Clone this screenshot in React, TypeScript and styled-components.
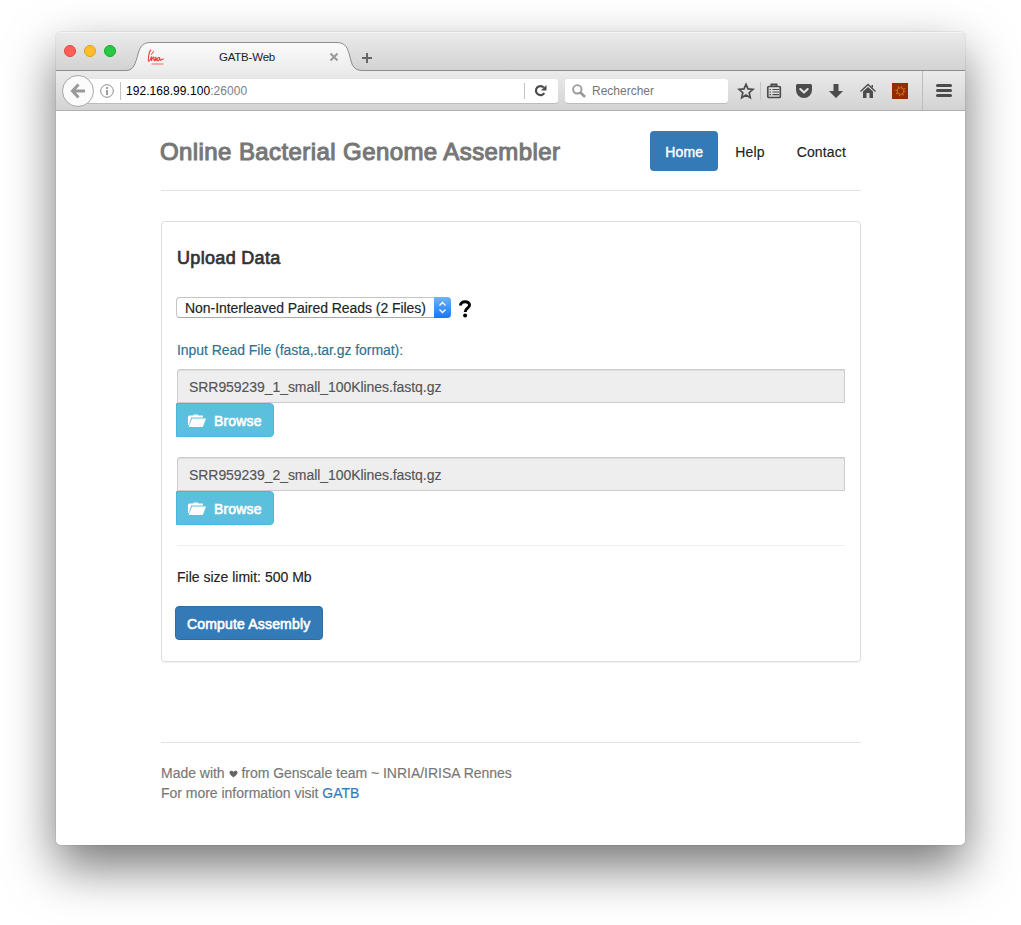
import React from "react";
import styled, { createGlobalStyle, css } from "styled-components";

const GlobalStyle = createGlobalStyle`
  * { box-sizing: border-box; }
  html, body { margin: 0; padding: 0; background: #fff; }
  body { font-family: "Liberation Sans", Arial, sans-serif; font-size: 14px; line-height: 20px; color: #222; }
  svg { display: block; flex: none; }
`;

const Desktop = styled.div`
  height: 925px;
  padding: 32px 56px 0 56px;
  overflow: hidden;
`;

const Window = styled.div`
  width: 909px;
  height: 813px;
  border-radius: 5px;
  background: #fff;
  overflow: hidden;
  display: flex;
  flex-direction: column;
`;

const WindowShadow = styled.div`
  width: 909px;
  height: 813px;
  border-radius: 5px;
  box-shadow: 0 22px 50px rgba(0, 0, 0, 0.54), 0 0 1px rgba(0, 0, 0, 0.55);
`;

const TabStrip = styled.div`
  position: relative;
  height: 39px;
  flex: none;
  display: flex;
  align-items: center;
  background: linear-gradient(#ebebeb, #d2d2d2);
  box-shadow: inset 0 1px 0 #f5f5f5;
`;

const TabShape = styled.svg`
  position: absolute;
  left: 0;
  top: 0;
`;

const Lights = styled.div`
  position: relative;
  display: flex;
  gap: 8px;
  margin: 0 0 1px 8px;
`;

const Light = styled.span<{ $fill: string; $edge: string }>`
  width: 12px;
  height: 12px;
  border-radius: 50%;
  background: ${(p) => p.$fill};
  border: 1px solid ${(p) => p.$edge};
`;

const Tab = styled.div`
  position: relative;
  display: flex;
  align-items: center;
  width: 192px;
  margin: 11px 0 0 31px;
`;

const TabTitle = styled.span`
  flex: 1;
  text-align: center;
  font-size: 11.5px;
  line-height: 14px;
  letter-spacing: -0.2px;
  color: #222;
`;

const NewTab = styled.svg`
  position: relative;
  margin: 12px 0 0 22px;
`;

const Toolbar = styled.div`
  height: 40px;
  flex: none;
  display: flex;
  align-items: center;
  background: linear-gradient(#ebebeb, #d3d3d3);
  border-bottom: 1px solid #b1b1b1;
  padding-left: 6px;
`;

const BackButton = styled.div`
  position: relative;
  width: 32px;
  height: 32px;
  flex: none;
  border-radius: 50%;
  border: 1px solid #a8a8a8;
  background: #fbfbfb;
  display: flex;
  align-items: center;
  justify-content: center;
`;

const field = css`
  height: 24px;
  background: #fff;
  border-radius: 3px;
  box-shadow: 0 1px 0 #bcbcbc;
  display: flex;
  align-items: center;
  font-size: 12px;
`;

const UrlField = styled.div`
  ${field}
  width: 474px;
  margin-left: -10px;
  padding-left: 16px;
  color: #808080;
`;

const Host = styled.span`
  color: #000;
`;

const UrlText = styled.span`
  flex: 1;
  padding: 1px 0 0 5px;
  letter-spacing: 0.05px;
`;

const SearchField = styled.div`
  ${field}
  width: 163px;
  margin-left: 7px;
  padding-left: 7px;
  gap: 6px;
  color: #757575;
`;

const Rule = styled.i<{ $h: number; $ml?: number }>`
  width: 1px;
  height: ${(p) => p.$h}px;
  margin-left: ${(p) => p.$ml || 0}px;
  flex: none;
  background: #c4c4c4;
`;

const Tools = styled.div`
  display: flex;
  align-items: center;
  margin-left: 9px;
`;

const ToolSlot = styled.span<{ $ml: number }>`
  width: 18px;
  height: 18px;
  margin-left: ${(p) => p.$ml}px;
`;

const MenuSlot = styled.div`
  height: 39px;
  display: flex;
  align-items: center;
  margin-left: 13px;
  padding-left: 12px;
  border-left: 1px solid #bdbdbd;
`;

const Page = styled.main`
  flex: 1;
  padding: 0 104px 0 105px;
  -webkit-text-stroke-width: 0.15px;
`;

const Header = styled.header`
  height: 80px;
  padding-top: 20px;
  border-bottom: 1px solid #e1e1e1;
  display: flex;
  justify-content: space-between;
  align-items: flex-start;
`;

const Title = styled.h1`
  margin: 0 0 0 -1px;
  font-size: 24px;
  font-weight: 400;
  line-height: 41px;
  letter-spacing: 0.41px;
  color: #777;
  -webkit-text-stroke: 1.1px #777;
  white-space: nowrap;
`;

const Nav = styled.nav`
  display: flex;
  gap: 2px;
  letter-spacing: 0.16px;
`;

const NavItem = styled.a<{ $active?: boolean }>`
  height: 40px;
  padding: 11px 15px 9px;
  border-radius: 4px;
  color: ${(p) => (p.$active ? "#fff" : "#222")};
  background: ${(p) => (p.$active ? "#337ab7" : "transparent")};
  -webkit-text-stroke-width: ${(p) => (p.$active ? "0.4px" : "0.15px")};
`;

const Panel = styled.section`
  height: 441px;
  margin-top: 30px;
  padding: 26px 15px 0;
  border: 1px solid #ddd;
  border-radius: 4px;
  box-shadow: 0 1px 1px rgba(0, 0, 0, 0.06);
`;

const PanelTitle = styled.h2`
  margin: 0;
  font-size: 18px;
  font-weight: 400;
  line-height: 20px;
  letter-spacing: 0.32px;
  color: #333;
  -webkit-text-stroke: 0.7px #333;
`;

const SelectRow = styled.div`
  display: flex;
  margin: 29px 0 0 -1px;
`;

const Select = styled.div`
  width: 275px;
  height: 21px;
  border: 1px solid #c4c4c4;
  border-bottom-color: #aaa;
  border-right: 0;
  border-radius: 4px;
  padding-left: 8px;
  display: flex;
  justify-content: space-between;
  line-height: 21px;
  letter-spacing: -0.05px;
  color: #222;
  white-space: nowrap;
`;

const Stepper = styled.span`
  width: 17px;
  height: 21px;
  margin-top: -1px;
  border-radius: 0 4px 4px 0;
  background: linear-gradient(#6db4fa, #1677fb);
  display: flex;
  align-items: center;
  justify-content: center;
`;

const HelpIcon = styled.svg`
  margin: 3px 0 0 8px;
`;

const Label = styled.div`
  margin-top: 22px;
  color: #31708f;
  letter-spacing: -0.05px;
`;

const FileField = styled.div<{ $mt: number }>`
  height: 34px;
  margin-top: ${(p) => p.$mt}px;
  padding-left: 11px;
  line-height: 34px;
  letter-spacing: -0.06px;
  border: 1px solid #ccc;
  border-radius: 3px 0 0 0;
  box-shadow: inset 0 1px 1px rgba(0, 0, 0, 0.075);
  background: #eee;
  color: #555;
`;

const Button = styled.button<{ $info?: boolean }>`
  display: flex;
  align-items: center;
  height: 34px;
  width: ${(p) => (p.$info ? 98 : 148)}px;
  margin: ${(p) => (p.$info ? "0 0 0 -1px" : "19px 0 0 -2px")};
  padding: 2px 0 0 11px;
  gap: 8px;
  font: 14px/20px "Liberation Sans", Arial, sans-serif;
  letter-spacing: 0.17px;
  color: #fff;
  -webkit-text-stroke: 0.6px #fff;
  white-space: nowrap;
  background: ${(p) => (p.$info ? "#5bc0de" : "#337ab7")};
  border: 1px solid ${(p) => (p.$info ? "#46b8da" : "#2e6da4")};
  border-radius: ${(p) => (p.$info ? "0 4px 4px 0" : "4px")};
`;

const Divider = styled.hr`
  height: 1px;
  margin: 20px 0 0;
  border: 0;
  background: #eee;
`;

const Limit = styled.p`
  margin: 21px 0 0;
`;

const Footer = styled.footer`
  margin-top: 80px;
  padding-top: 20px;
  border-top: 1px solid #e1e1e1;
  letter-spacing: -0.02px;
  color: #777;
`;

const Heart = styled.svg`
  && { display: inline-block; }
`;

const Link = styled.a`
  color: #337ab7;
`;

const FolderOpen = () => (
  <svg width="18" height="14" viewBox="0 0 18 14" fill="#fff">
    <path d="M0 11V2.500L1 1.500H5L6 .5H9.500L10.500 1.500H15V3.500H3.200L.8 11Z" />
    <path d="M4 4.500H18L14.800 13H.6Z" />
  </svg>
);

function Browser({ children }: { children: React.ReactNode }) {
  return (
    <WindowShadow>
      <Window>
        <TabStrip>
          <TabShape width="909" height="39" viewBox="0 0 909 39">
            <defs>
              <linearGradient id="tab" x1="0" y1="0" x2="0" y2="1">
                <stop offset="0" stopColor="#fbfbfb" />
                <stop offset="1" stopColor="#ececec" />
              </linearGradient>
            </defs>
            <path d="M70 39C78 39 79.500 31 82 22C84.500 13 88 10.500 95 10.500H281C290 10.500 292 17 294 25C296 34 298 39 307 39Z" fill="url(#tab)" />
            <path d="M0 38.500H70C78 38.500 79.500 31 82 22C84.500 13 88 10.500 95 10.500H281C290 10.500 292 17 294 25C296 34 298 38.500 307 38.500H909" fill="none" stroke="#8d8d8d" />
          </TabShape>
          <Lights>
            <Light $fill="#ff5f57" $edge="#e2463f" />
            <Light $fill="#ffbd2e" $edge="#e1a116" />
            <Light $fill="#28c940" $edge="#12ac28" />
          </Lights>
          <Tab>
            <svg width="18" height="17" viewBox="0 0 18 17" fill="none" stroke="#ec4038" strokeLinecap="round">
              <path d="M3.800 1C1.500 3 1.200 11.500 1.500 12C2.500 13 4 9 4.500 7.500V12C5 9.500 6.500 7 7 8.500V11.500C8 12 8.500 10 9 8V11.500M12.500 8.500C9.500 8 9.500 12.500 11.500 11.500C12.500 11 12.800 8.500 12.800 8.500C12.500 12 13.500 11.500 14.500 10.500L16.500 10" strokeWidth="1.100" />
              <path d="M4.500 5.500L6.500 2.500" />
              <path d="M5 15H16" stroke="#f29a90" strokeWidth="1.500" />
            </svg>
            <TabTitle>GATB-Web</TabTitle>
            <svg width="10" height="10" viewBox="0 0 10 10" stroke="#999" strokeWidth="2">
              <path d="M1.500 1.500L8.500 8.500M8.500 1.500L1.500 8.500" />
            </svg>
          </Tab>
          <NewTab width="12" height="12" viewBox="0 0 12 12" stroke="#666" strokeWidth="2">
            <path d="M6 1V11M1 6H11" />
          </NewTab>
        </TabStrip>
        <Toolbar>
          <BackButton>
            <svg width="16" height="16" viewBox="0 0 16 16" fill="none" stroke="#999" strokeWidth="3">
              <path d="M8.500 1.500L2.500 8L8.500 14.500M3 8H15" />
            </svg>
          </BackButton>
          <UrlField>
            <svg width="14" height="14" viewBox="0 0 14 14" fill="none" stroke="#8c8c8c">
              <circle cx="7" cy="7" r="6.300" />
              <path d="M7 6V11M7 3V5" strokeWidth="1.700" />
            </svg>
            <Rule $h={18} $ml={6} />
            <UrlText><Host>192.168.99.100</Host>:26000</UrlText>
            <Rule $h={16} />
            <svg width="33" height="14" viewBox="0 0 33 14" fill="none">
              <path d="M18.800 3.600A4.500 4.500 0 1 0 19.300 9" stroke="#4c4c4c" strokeWidth="2.200" />
              <path d="M21.500 1V6.600H15.900Z" fill="#4c4c4c" />
            </svg>
          </UrlField>
          <SearchField>
            <svg width="14" height="14" viewBox="0 0 14 14" fill="none" stroke="#999">
              <circle cx="5.300" cy="5.300" r="4.200" strokeWidth="1.900" />
              <path d="M8.500 8.500L13 13" strokeWidth="2.500" />
            </svg>
            Rechercher
          </SearchField>
          <Tools>
            <ToolSlot $ml={0}>
              <svg width="18" height="18" viewBox="0 0 18 18" fill="none" stroke="#4c4c4c" strokeWidth="1.700">
                <path d="M9 2.300L11 6.900L16 7.400L12.200 10.700L13.300 15.700L9 13.100L4.700 15.700L5.800 10.700L2 7.400L7 6.900Z" />
              </svg>
            </ToolSlot>
            <Rule $h={18} $ml={5} />
            <ToolSlot $ml={4}>
              <svg width="18" height="18" viewBox="0 0 18 18" fill="none" stroke="#4c4c4c">
                <path d="M6.500 4V2.500H11.500V4" strokeWidth="2" />
                <rect x="2.800" y="4.500" width="12.500" height="11" rx="1" strokeWidth="1.700" />
                <path d="M4.500 7.500H6M7.500 7.500H14M4.500 10H6M7.500 10H14M4.500 12.700H6M7.500 12.700H14" strokeWidth="1.200" />
              </svg>
            </ToolSlot>
            <ToolSlot $ml={12}>
              <svg width="18" height="18" viewBox="0 0 18 18">
                <path d="M2.500 2H15.500Q17 2 17 3.500V8A8 8 0 0 1 1 8V3.500Q1 2 2.500 2Z" fill="#4c4c4c" />
                <path d="M5.300 7L9 10.500L12.700 7" fill="none" stroke="#e4e4e4" strokeWidth="2.100" strokeLinecap="round" strokeLinejoin="round" />
              </svg>
            </ToolSlot>
            <ToolSlot $ml={14}>
              <svg width="18" height="18" viewBox="0 0 18 18" fill="#4c4c4c">
                <path d="M6.500 2H11.500V9H16L9 16L2 9H6.500Z" />
              </svg>
            </ToolSlot>
            <ToolSlot $ml={14}>
              <svg width="18" height="18" viewBox="0 0 18 18">
                <path d="M1.500 9.500L9 2.500L16.500 9.500" fill="none" stroke="#4c4c4c" strokeWidth="1.400" />
                <path d="M4 9.500L9 5L14 9.500V16H10.500V11H7.500V16H4ZM12.500 3H14V6L12.500 5Z" fill="#4c4c4c" />
              </svg>
            </ToolSlot>
            <ToolSlot $ml={14}>
              <svg width="18" height="18" viewBox="0 0 18 18">
                <path d="M1 1H17V17H1Z" fill="#942b05" />
                <circle cx="9.500" cy="9" r="3.300" fill="none" stroke="#c87914" strokeWidth="1" />
                <circle cx="9.500" cy="9" r="4.500" fill="none" stroke="#c87914" strokeWidth="1.300" strokeDasharray="1.300 2.230" />
              </svg>
            </ToolSlot>
            <MenuSlot>
              <svg width="18" height="18" viewBox="0 0 18 18" stroke="#4c4c4c" strokeWidth="3" strokeLinecap="round">
                <path d="M2.500 3.500H15.500M2.500 8.500H15.500M2.500 13.500H15.500" />
              </svg>
            </MenuSlot>
          </Tools>
        </Toolbar>
        {children}
      </Window>
    </WindowShadow>
  );
}

export default function App() {
  return (
    <Desktop>
      <GlobalStyle />
      <Browser>
        <Page>
          <Header>
            <Title>Online Bacterial Genome Assembler</Title>
            <Nav>
              <NavItem $active>Home</NavItem>
              <NavItem>Help</NavItem>
              <NavItem>Contact</NavItem>
            </Nav>
          </Header>
          <Panel>
            <PanelTitle>Upload Data</PanelTitle>
            <SelectRow>
              <Select>
                Non-Interleaved Paired Reads (2 Files)
                <Stepper>
                  <svg width="9" height="13" viewBox="0 0 9 13" fill="none" stroke="#fff" strokeWidth="1.300">
                    <path d="M1.500 4.500L4.500 1.500L7.500 4.500M1.500 8.500L4.500 11.500L7.500 8.500" />
                  </svg>
                </Stepper>
              </Select>
              <HelpIcon width="12" height="18" viewBox="0 0 12 18">
                <path d="M1.500 5.500C1.500 0.500 10.500 0.500 10.500 5C10.500 8.300 6.200 8 6.200 12" fill="none" stroke="#000" strokeWidth="3" />
                <circle cx="6.100" cy="15.600" r="2" />
              </HelpIcon>
            </SelectRow>
            <Label>Input Read File (fasta,.tar.gz format):</Label>
            <FileField $mt={9}>SRR959239_1_small_100Klines.fastq.gz</FileField>
            <Button $info><FolderOpen />Browse</Button>
            <FileField $mt={20}>SRR959239_2_small_100Klines.fastq.gz</FileField>
            <Button $info><FolderOpen />Browse</Button>
            <Divider />
            <Limit>File size limit: 500 Mb</Limit>
            <Button>Compute Assembly</Button>
          </Panel>
          <Footer>
            Made with{" "}
            <Heart width="9" height="8" viewBox="0 0 8 8" fill="#666">
              <path d="M4 7.500C3 6.500 0 4.500 0 2.500C0 .5 3 .3 4 2C5 .3 8 .5 8 2.500C8 4.500 5 6.500 4 7.500Z" />
            </Heart>{" "}
            from Genscale team ~ INRIA/IRISA Rennes
            <br />
            For more information visit <Link>GATB</Link>
          </Footer>
        </Page>
      </Browser>
    </Desktop>
  );
}
